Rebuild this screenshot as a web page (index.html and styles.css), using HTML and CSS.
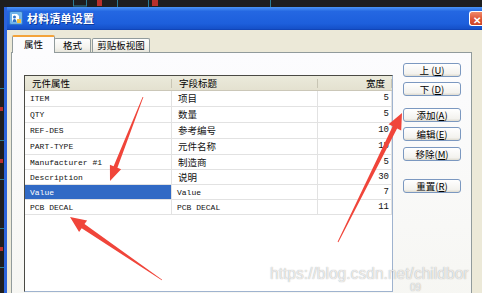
FILE: index.html
```html
<!DOCTYPE html>
<html lang="zh-CN">
<head>
    <meta charset="UTF-8">
    <title>材料清单设置</title>
    <link rel="stylesheet" href="styles.css">
</head>
<body>
<div class="screen">
    <!-- PCB-Hintergrund oben -->
    <svg class="pcb-top" width="482" height="7" viewBox="0 0 482 7">
        <rect width="482" height="7" fill="#1e1e1e"/>
        <rect x="73.5" y="-1" width="13" height="7" fill="none" stroke="#2a7c96"/>
        <rect x="97" y="0" width="5" height="6" fill="#b8302c"/>
        <line x1="117.5" y1="0" x2="117.5" y2="7" stroke="#2a7c96"/>
        <line x1="148.5" y1="0" x2="148.5" y2="7" stroke="#2a7c96"/>
        <rect x="152" y="0" width="6" height="6" fill="#b8302c"/>
        <line x1="270.5" y1="0" x2="270.5" y2="7" stroke="#2a7c96"/>
    </svg>

    <div class="main">
        <svg class="pcb-left" width="4" height="286" viewBox="0 0 4 286">
            <rect width="4" height="286" fill="#1e1e1e"/>
            <rect x="0" y="81" width="4" height="1" fill="#2a7c96"/>
            <rect x="0" y="100" width="3" height="4" fill="#b8302c"/>
            <rect x="0" y="133" width="4" height="1" fill="#2a7c96"/>
            <rect x="0" y="152" width="3" height="4" fill="#b8302c"/>
            <rect x="0" y="172" width="4" height="1" fill="#2a7c96"/>
            <rect x="0" y="221" width="4" height="1" fill="#2a7c96"/>
            <rect x="0" y="240" width="3" height="4" fill="#b8302c"/>
            <rect x="0" y="260" width="4" height="1" fill="#2a7c96"/>
        </svg>

        <div class="window">
            <div class="titlebar">
                <svg class="app-icon" width="14" height="14" viewBox="0 0 14 14">
                    <rect x="0.5" y="0.5" width="13" height="13" rx="1.5" fill="#6fb3ea" stroke="#2f74c8"/>
                    <path d="M3 3h5l2 2v6H3z" fill="#ffffff"/>
                    <circle cx="5.5" cy="6" r="1.5" fill="#2f74c8"/>
                    <path d="M3.5 11c0-2 1-3 2-3s2 1 2 3z" fill="#2f74c8"/>
                    <rect x="8" y="8" width="4" height="4" fill="#f0c040"/>
                </svg>
                <span class="title">材料清单设置</span>
                <span class="close">&#x2715;</span>
            </div>

            <div class="client">
                <div class="tabs">
                    <div class="tab active">属性</div>
                    <div class="tab">格式</div>
                    <div class="tab">剪贴板视图</div>
                </div>

                <div class="page">
                    <div class="list">
                        <div class="row head">
                            <div class="hcell">元件属性</div>
                            <div class="hcell">字段标题</div>
                            <div class="hcell num">宽度</div>
                        </div>
                        <div class="row">
                            <div class="cell mono">ITEM</div>
                            <div class="cell">项目</div>
                            <div class="cell num">5</div>
                        </div>
                        <div class="row">
                            <div class="cell mono">QTY</div>
                            <div class="cell">数量</div>
                            <div class="cell num">5</div>
                        </div>
                        <div class="row">
                            <div class="cell mono">REF-DES</div>
                            <div class="cell">参考编号</div>
                            <div class="cell num">10</div>
                        </div>
                        <div class="row">
                            <div class="cell mono">PART-TYPE</div>
                            <div class="cell">元件名称</div>
                            <div class="cell num">15</div>
                        </div>
                        <div class="row">
                            <div class="cell mono">Manufacturer #1</div>
                            <div class="cell">制造商</div>
                            <div class="cell num">5</div>
                        </div>
                        <div class="row">
                            <div class="cell mono">Description</div>
                            <div class="cell">说明</div>
                            <div class="cell num">30</div>
                        </div>
                        <div class="row">
                            <div class="cell mono selected">Value</div>
                            <div class="cell mono">Value</div>
                            <div class="cell num">7</div>
                        </div>
                        <div class="row">
                            <div class="cell mono">PCB DECAL</div>
                            <div class="cell mono">PCB DECAL</div>
                            <div class="cell num">11</div>
                        </div>
                    </div>

                    <div class="buttons">
                        <button class="btn">上 (<u>U</u>)</button>
                        <button class="btn gap-s">下 (<u>D</u>)</button>
                        <button class="btn gap-m">添加(<u>A</u>)</button>
                        <button class="btn gap-s">编辑(<u>E</u>)</button>
                        <button class="btn gap-s">移除(<u>M</u>)</button>
                        <button class="btn gap-l">重置(<u>R</u>)</button>
                    </div>
                </div>
            </div>
        </div>
    </div>

    <!-- Markierungspfeile ueber dem Dialog -->
    <svg class="marks" width="482" height="293" viewBox="0 0 482 293">
        <g fill="#f0453a">
            <polygon points="143.4,97.1 117.4,167.7 121.1,169.2 110,181 109.9,164.8 113.6,166.3 142.6,96.9"/>
            <polygon points="162.2,279.7 84.5,224 87.1,220.4 70,217 79.1,231.9 81.7,228.2 161.8,280.3"/>
            <polygon points="338.4,242.2 397.1,128.4 401.2,130.4 402,113 388.6,124.2 392.7,126.2 337.6,241.8"/>
        </g>
    </svg>

    <div class="watermark">https://blog.csdn.net/childbor</div>
    <div class="watermark second">09</div>
</div>
</body>
</html>
```

FILE: styles.css
```css
body {
    margin: 0;
    background: #1e1e1e;
    font-family: "Noto Sans CJK SC", "Liberation Sans", sans-serif;
}
.screen {
    position: relative;
    width: 482px;
    height: 293px;
    overflow: hidden;
}
.pcb-top {
    display: block;
}
.main {
    display: flex;
}
.pcb-left {
    display: block;
    flex: none;
}
.window {
    flex: 1;
    border-left: 3px solid #2b63db;
}
.titlebar {
    display: flex;
    align-items: center;
    height: 22px;
    padding-left: 2px;
    background: linear-gradient(#4b94f4, #2467e2 20%, #1d5fdc 75%, #1550c8);
    border-bottom: 1px solid #1145b8;
}
.app-icon {
    display: block;
    margin-right: 4px;
}
.title {
    color: #fff;
    font-size: 11px;
    font-weight: bold;
    letter-spacing: 0.2px;
    text-shadow: 1px 1px 0 #0d3a9c;
}
.close {
    margin-left: auto;
    width: 13px;
    height: 15px;
    line-height: 15px;
    text-align: center;
    color: #fff;
    font-size: 10px;
    font-weight: bold;
    background: linear-gradient(#f08a6a, #e0583a 50%, #cc4426);
    border: 1px solid #fff;
    border-right: none;
    border-radius: 3px 0 0 3px;
    box-sizing: border-box;
    padding-left: 2px;
}
.client {
    background: #ece9d8;
    padding: 5px 0 0 4px;
    height: 264px;
}
.tabs {
    display: flex;
    align-items: flex-end;
    margin-left: 1px;
    position: relative;
    z-index: 1;
}
.tab {
    height: 13px;
    line-height: 12px;
    font-size: 9.5px;
    text-align: center;
    color: #000;
    border: 1px solid #919b9c;
    border-bottom: none;
    border-radius: 2px 2px 0 0;
    background: linear-gradient(#fefefe, #f3f2ec 70%, #e6e4da);
}
.tab:nth-child(1) { width: 41px; }
.tab:nth-child(2) { width: 35px; margin-left: -1px; }
.tab:nth-child(3) { width: 56px; margin-left: 1px; }
.tab.active {
    height: 16px;
    line-height: 15px;
    background: #fcfcfe;
    border-top: 2px solid #f3a33a;
    margin-bottom: -1px;
}
.page {
    display: flex;
    align-items: flex-start;
    margin-right: 10px;
    height: 260px;
    padding-left: 12px;
    border: 1px solid #919b9c;
    background: linear-gradient(#fcfcfe, #f6f6f2);
}
.list {
    margin-top: 22px;
    width: 369px;
    height: 217px;
    box-sizing: border-box;
    background: #fff;
    border: 1px solid #9fb3cf;
    border-top-color: #4a4a44;
    border-left-color: #4a4a44;
}
.row {
    display: grid;
    grid-template-columns: 147px 146px 74px;
    height: 16px;
}
.row:nth-child(n+6) {
    height: 15px;
}
.row.head {
    height: 15px;
}
.hcell {
    box-sizing: border-box;
    padding-left: 7px;
    font-size: 9.5px;
    line-height: 14px;
    border-bottom: 1px solid #cbc7b8;
    background: linear-gradient(#c8c5b4, #c8c5b4) right 3px / 1px 9px no-repeat,
                linear-gradient(#ebeadb, #e4e1d0);
}
.hcell.num {
    text-align: right;
    padding-right: 7px;
}
.cell {
    box-sizing: border-box;
    padding-left: 6px;
    font-size: 9.5px;
    line-height: 15px;
    color: #111;
    border-right: 1px solid #e2e2e2;
    border-bottom: 1px solid #e2e2e2;
    white-space: nowrap;
    overflow: hidden;
}
.cell.mono {
    font-family: "Liberation Mono", monospace;
    font-size: 8px;
    padding-left: 5px;
}
.cell.num {
    font-family: "Liberation Mono", monospace;
    font-size: 9px;
    text-align: right;
    padding-right: 2px;
}
.cell.selected {
    background: #316ac5;
    color: #fff;
}
.buttons {
    display: flex;
    flex-direction: column;
    margin-top: 10px;
    margin-left: 10px;
}
.btn {
    width: 58px;
    height: 14px;
    padding: 0;
    font-family: "Noto Sans CJK SC", sans-serif;
    font-size: 9.5px;
    line-height: 12px;
    color: #000;
    border: 1px solid #7b98c0;
    border-radius: 3px;
    background: linear-gradient(#ffffff, #f3f2ee 80%, #dedbd0);
}
.btn.gap-s { margin-top: 5px; }
.btn.gap-m { margin-top: 12px; }
.btn.gap-l { margin-top: 18px; }
.btn.gap-s + .btn.gap-s { margin-top: 6px; }
.marks {
    position: absolute;
    left: 0;
    top: 0;
    pointer-events: none;
}
.watermark {
    position: absolute;
    left: 270px;
    top: 266px;
    font-family: "Liberation Sans", sans-serif;
    font-size: 15.6px;
    line-height: 16px;
    color: rgba(255, 255, 255, 0.75);
    text-shadow: 0 0 1px rgba(90, 90, 90, 0.6);
    white-space: nowrap;
}
.watermark.second {
    left: 410px;
    top: 283px;
    font-size: 10px;
    line-height: 10px;
}
```
